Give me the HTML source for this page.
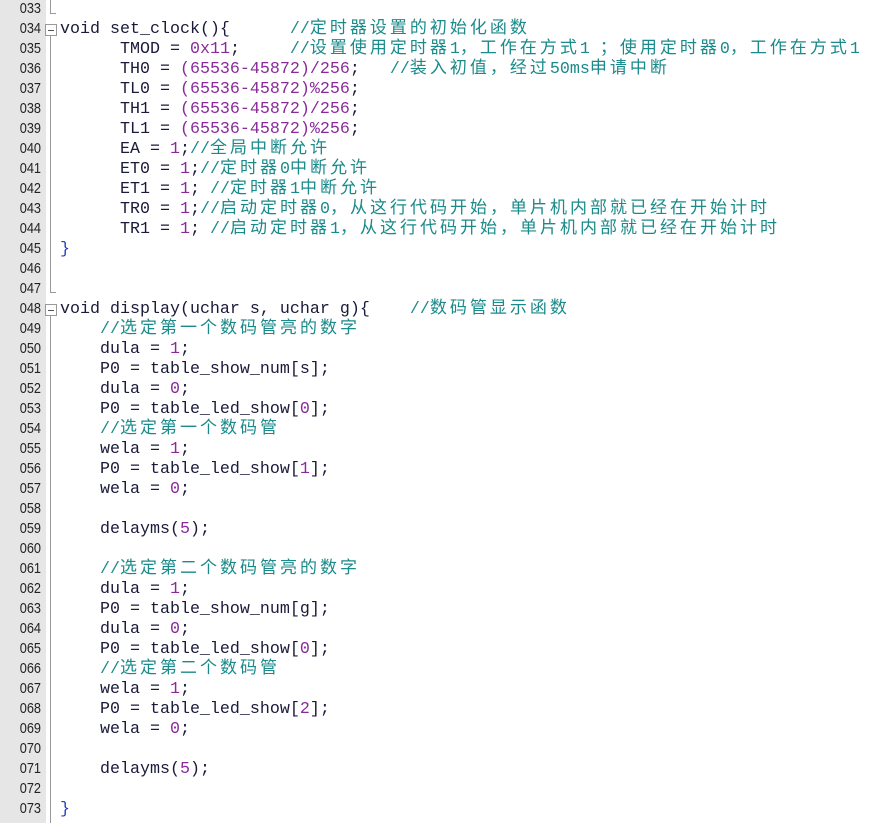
<!DOCTYPE html>
<html><head><meta charset="utf-8"><style>
html,body{margin:0;padding:0;background:#fff;width:887px;height:823px;overflow:hidden}
#g{position:absolute;left:0;top:0;width:46px;height:823px;background:#e6e6e6}
.l{position:absolute;left:0;height:20px;line-height:20px;width:887px;white-space:pre}
.n{position:absolute;left:0;width:41px;text-align:right;font:15px "Liberation Sans",sans-serif;color:#222;top:0;transform:scaleX(0.85);transform-origin:right}
.t{position:absolute;left:60px;top:0;height:20px;line-height:20px;font:16.67px/20px "Liberation Mono",monospace;color:#1a1a3a}
.k{color:#1a1a3a}
.num{color:#8a2a9a}
.cm{color:#1a8a8a}
.c{font-family:"Noto Sans CJK SC",sans-serif;font-size:17px;letter-spacing:3px;line-height:0;vertical-align:baseline}
.b{color:#2040c0}
.vl{position:absolute;left:50px;width:1px;background:#999}
.box{position:absolute;left:45px;width:10px;height:10px;border:1px solid #999;background:#fff}
.box:after{content:"";position:absolute;left:2px;top:5px;width:6px;height:1px;background:#555}
.end{position:absolute;left:50px;width:6px;height:1px;background:#999}
</style></head><body>
<div id="g"></div>
<div class="vl" style="top:0;height:14px"></div><div class="end" style="top:13px"></div>
<div class="box" style="top:24px"></div>
<div class="vl" style="top:36px;height:257px"></div><div class="end" style="top:292px"></div>
<div class="box" style="top:304px"></div>
<div class="vl" style="top:316px;height:507px"></div>

<div class="l" style="top:0"><span class="n">033</span></div>
<div class="l" style="top:20px"><span class="n">034</span><span class="t"><span class="k">void</span> set_clock(){      <span class="cm">//<span class="c">定时器设置的初始化函数</span></span></span></div>
<div class="l" style="top:40px"><span class="n">035</span><span class="t">      TMOD = <span class="num">0x11</span>;     <span class="cm">//<span class="c">设置使用定时器</span>1<span class="c">，工作在方式</span>1 <span class="c">；使用定时器</span>0<span class="c">，工作在方式</span>1</span></span></div>
<div class="l" style="top:60px"><span class="n">036</span><span class="t">      TH0 = <span class="num">(65536-45872)/256</span>;   <span class="cm">//<span class="c">装入初值，经过</span>50ms<span class="c">申请中断</span></span></span></div>
<div class="l" style="top:80px"><span class="n">037</span><span class="t">      TL0 = <span class="num">(65536-45872)%256</span>;</span></div>
<div class="l" style="top:100px"><span class="n">038</span><span class="t">      TH1 = <span class="num">(65536-45872)/256</span>;</span></div>
<div class="l" style="top:120px"><span class="n">039</span><span class="t">      TL1 = <span class="num">(65536-45872)%256</span>;</span></div>
<div class="l" style="top:140px"><span class="n">040</span><span class="t">      EA = <span class="num">1</span>;<span class="cm">//<span class="c">全局中断允许</span></span></span></div>
<div class="l" style="top:160px"><span class="n">041</span><span class="t">      ET0 = <span class="num">1</span>;<span class="cm">//<span class="c">定时器</span>0<span class="c">中断允许</span></span></span></div>
<div class="l" style="top:180px"><span class="n">042</span><span class="t">      ET1 = <span class="num">1</span>; <span class="cm">//<span class="c">定时器</span>1<span class="c">中断允许</span></span></span></div>
<div class="l" style="top:200px"><span class="n">043</span><span class="t">      TR0 = <span class="num">1</span>;<span class="cm">//<span class="c">启动定时器</span>0<span class="c">，从这行代码开始，单片机内部就已经在开始计时</span></span></span></div>
<div class="l" style="top:220px"><span class="n">044</span><span class="t">      TR1 = <span class="num">1</span>; <span class="cm">//<span class="c">启动定时器</span>1<span class="c">，从这行代码开始，单片机内部就已经在开始计时</span></span></span></div>
<div class="l" style="top:240px"><span class="n">045</span><span class="t"><span class="b">}</span></span></div>
<div class="l" style="top:260px"><span class="n">046</span></div>
<div class="l" style="top:280px"><span class="n">047</span></div>
<div class="l" style="top:300px"><span class="n">048</span><span class="t"><span class="k">void</span> display(uchar s, uchar g){    <span class="cm">//<span class="c">数码管显示函数</span></span></span></div>
<div class="l" style="top:320px"><span class="n">049</span><span class="t">    <span class="cm">//<span class="c">选定第一个数码管亮的数字</span></span></span></div>
<div class="l" style="top:340px"><span class="n">050</span><span class="t">    dula = <span class="num">1</span>;</span></div>
<div class="l" style="top:360px"><span class="n">051</span><span class="t">    P0 = table_show_num[s];</span></div>
<div class="l" style="top:380px"><span class="n">052</span><span class="t">    dula = <span class="num">0</span>;</span></div>
<div class="l" style="top:400px"><span class="n">053</span><span class="t">    P0 = table_led_show[<span class="num">0</span>];</span></div>
<div class="l" style="top:420px"><span class="n">054</span><span class="t">    <span class="cm">//<span class="c">选定第一个数码管</span></span></span></div>
<div class="l" style="top:440px"><span class="n">055</span><span class="t">    wela = <span class="num">1</span>;</span></div>
<div class="l" style="top:460px"><span class="n">056</span><span class="t">    P0 = table_led_show[<span class="num">1</span>];</span></div>
<div class="l" style="top:480px"><span class="n">057</span><span class="t">    wela = <span class="num">0</span>;</span></div>
<div class="l" style="top:500px"><span class="n">058</span></div>
<div class="l" style="top:520px"><span class="n">059</span><span class="t">    delayms(<span class="num">5</span>);</span></div>
<div class="l" style="top:540px"><span class="n">060</span></div>
<div class="l" style="top:560px"><span class="n">061</span><span class="t">    <span class="cm">//<span class="c">选定第二个数码管亮的数字</span></span></span></div>
<div class="l" style="top:580px"><span class="n">062</span><span class="t">    dula = <span class="num">1</span>;</span></div>
<div class="l" style="top:600px"><span class="n">063</span><span class="t">    P0 = table_show_num[g];</span></div>
<div class="l" style="top:620px"><span class="n">064</span><span class="t">    dula = <span class="num">0</span>;</span></div>
<div class="l" style="top:640px"><span class="n">065</span><span class="t">    P0 = table_led_show[<span class="num">0</span>];</span></div>
<div class="l" style="top:660px"><span class="n">066</span><span class="t">    <span class="cm">//<span class="c">选定第二个数码管</span></span></span></div>
<div class="l" style="top:680px"><span class="n">067</span><span class="t">    wela = <span class="num">1</span>;</span></div>
<div class="l" style="top:700px"><span class="n">068</span><span class="t">    P0 = table_led_show[<span class="num">2</span>];</span></div>
<div class="l" style="top:720px"><span class="n">069</span><span class="t">    wela = <span class="num">0</span>;</span></div>
<div class="l" style="top:740px"><span class="n">070</span></div>
<div class="l" style="top:760px"><span class="n">071</span><span class="t">    delayms(<span class="num">5</span>);</span></div>
<div class="l" style="top:780px"><span class="n">072</span></div>
<div class="l" style="top:800px"><span class="n">073</span><span class="t"><span class="b">}</span></span></div>
</body></html>
